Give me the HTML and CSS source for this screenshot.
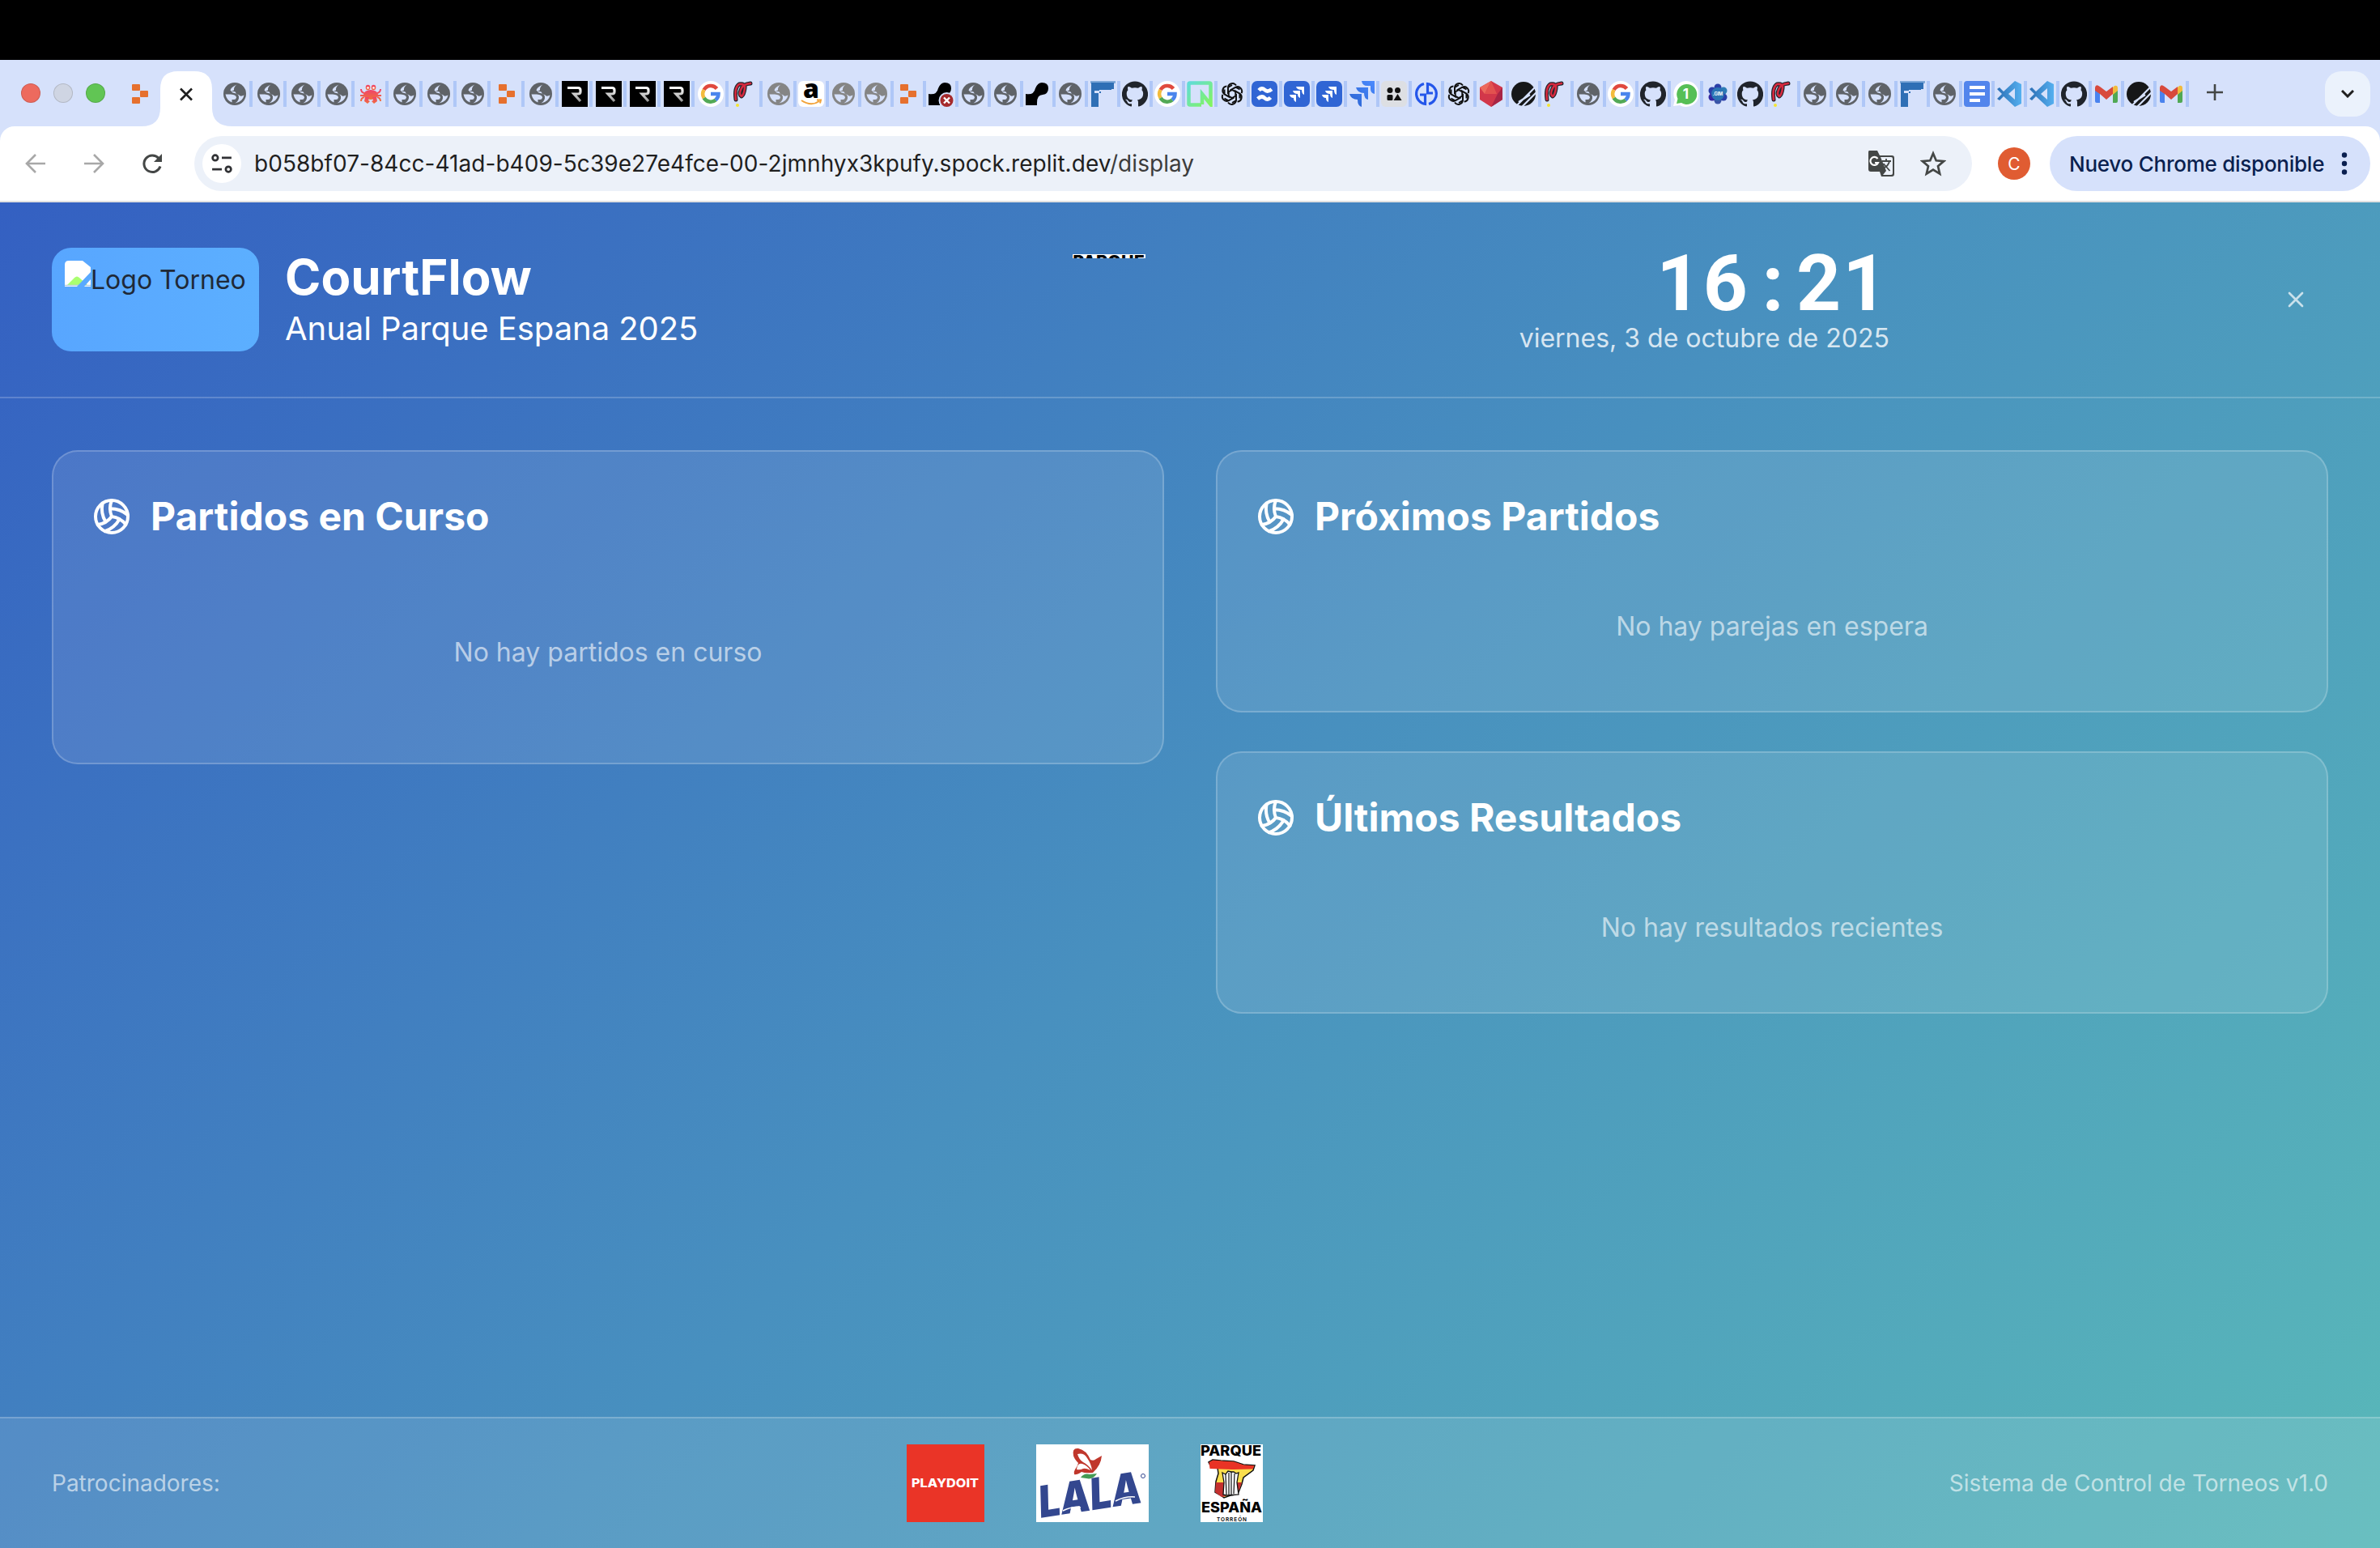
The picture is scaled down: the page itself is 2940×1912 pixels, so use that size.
FILE: index.html
```html
<!DOCTYPE html>
<html lang="es">
<head>
<meta charset="utf-8">
<title>CourtFlow</title>
<link rel="stylesheet" href="styles.css">
</head>
<body>
<svg class="defs" aria-hidden="true">
  <defs>
    <linearGradient id="gR" x1="0" y1="0" x2="0" y2="1"><stop offset="0" stop-color="#fff"/><stop offset="1" stop-color="#999"/></linearGradient>
    <linearGradient id="gN" x1="0" y1="0" x2="1" y2="1"><stop offset="0" stop-color="#5fdcd8"/><stop offset="1" stop-color="#83f55f"/></linearGradient>
    <linearGradient id="gC" x1="0" y1="0" x2="0" y2="1"><stop offset="0" stop-color="#f0426c"/><stop offset="1" stop-color="#f0703c"/></linearGradient>
    <linearGradient id="gJ" x1="0" y1="1" x2="1" y2="0"><stop offset="0" stop-color="#2a62cf"/><stop offset="1" stop-color="#4b8bff"/></linearGradient>
    <linearGradient id="gV" x1="0" y1="0" x2="1" y2="0"><stop offset="0" stop-color="#2c6fb5"/><stop offset="1" stop-color="#55b0f0"/></linearGradient>
    <symbol id="globe" viewBox="0 0 32 32"><circle cx="16" cy="16" r="14" fill="currentColor"/><path fill="#d6e1fb" d="M4.500 16.500H11q7 .5 7 4-.5 2.500-3 2.500h-2.500v3.500Q6 24 4.500 16.500zM18.500 4.500Q11 8 10.500 11.500q1.500 2 4.500 1.500q2 0 2.500 2 1 2 3.500 2 2 3 6.500.5Q26 25.500 16.500 27.500q5-3.500 4.500-8-.500-4-5.500-4.500-3-.5-3.500-2 1.500-1.500 3-1.500-.500-4 3.500-7z"/></symbol>
    <symbol id="replit" viewBox="0 0 32 32"><g fill="#e6702e"><rect x="6" y="4" width="10" height="8" rx="1"/><rect x="16" y="12" width="10" height="8" rx="1"/><rect x="6" y="20" width="10" height="8" rx="1"/></g></symbol>
    <symbol id="crab" viewBox="0 0 32 32"><g fill="url(#gC)"><ellipse cx="16" cy="17" rx="9" ry="6"/><ellipse cx="12.500" cy="8" rx="2.800" ry="3.300"/><ellipse cx="19.500" cy="8" rx="2.800" ry="3.300"/><path d="M9 20h5l-1 4 2 1-3 3-4-3zM18 20h5l1 5-4 3-3-3 2-1z"/></g><g fill="none" stroke="url(#gC)" stroke-width="2"><path d="M8 15q-4-1-4-5M8 18H3M8 20q-4 1-4 5M24 15q4-1 4-5M24 18h5M24 20q4 1 4 5"/></g><circle cx="12.500" cy="8.500" r="1.300" fill="#fff"/><circle cx="19.500" cy="8.500" r="1.300" fill="#fff"/></symbol>
    <symbol id="rr" viewBox="0 0 32 32"><path d="M0 0h32v32H0z"/><path d="M7 8.500h13q3 0 3 3v2q0 2.500-3 2.500h-5l8 9" fill="none" stroke="url(#gR)" stroke-width="3.200"/></symbol>
    <symbol id="google" viewBox="0 0 32 32"><circle cx="16" cy="16" r="16" fill="#fff"/><g fill="none" stroke-width="4.500"><path d="M23.500 9.500A9.700 9.700 0 0 0 7.600 11" stroke="#e0493e"/><path d="M7.600 11a9.700 9.700 0 0 0 0 10" stroke="#f3bc3c"/><path d="M7.600 21a9.700 9.700 0 0 0 14.500 2.500" stroke="#53a956"/><path d="M22 23.500q3.500-3 3.500-7.500h-9.500" stroke="#4a85ed"/></g></symbol>
    <symbol id="pp" viewBox="0 0 32 32"><g fill="none" stroke-linecap="round" stroke-linejoin="round"><path d="M5 23Q3 8 9 4q8-1 7 5-1 8-4 10-4-2 0-10 2-5 11-6" stroke="#20242c" stroke-width="5"/><path d="M5 23Q3 8 9 4q8-1 7 5-1 8-4 10-4-2 0-10 2-5 11-6" stroke="#d6293e" stroke-width="2.600"/></g><circle cx="7" cy="30" r="2" fill="#f5e532"/></symbol>
    <symbol id="amazon" viewBox="0 0 32 32"><rect width="32" height="32" rx="6" fill="#fff"/><text x="16" y="21" text-anchor="middle" font-family="Open Sans" font-weight="800" font-size="32">a</text><path d="M4 24q12 8 22 1M23 23.500h5l-1 4" fill="none" stroke="#f2a33a" stroke-width="2"/></symbol>
    <symbol id="blob" viewBox="0 0 32 32"><path d="M1 16q10 2 12-7Q16 2 21 2q8 0 8 7t-7 8q-7 0-7 10v3H1z"/></symbol>
    <symbol id="blobx" viewBox="0 0 32 32"><path d="M1 16q10 2 12-7Q16 2 21 2q8 0 8 7t-7 8q-7 0-7 10v3H1z"/><circle cx="23.500" cy="24" r="10" fill="#d6e1fb"/><circle cx="23.500" cy="24" r="8" fill="#a52a2c"/><path d="M20 20.500l7 7m0-7l-7 7" stroke="#fff" stroke-width="2.400"/></symbol>
    <symbol id="flag" viewBox="0 0 32 32"><path fill="#7fa8d8" d="M1 0h31v3H1z"/><path fill="#2f6fb5" d="M2 2h28v8h-3v1h-4v1h-9v3h-3v17H2z"/><path fill="#d6e1fb" d="M6 12h6v3H6zM12 11h14v2H12z"/></symbol>
    <symbol id="github" viewBox="0 0 24 24"><path fill="#20242b" d="M12 .3a12 12 0 0 0-3.800 23.400c.6.1.8-.3.8-.6v-2c-3.300.7-4-1.600-4-1.600-.6-1.400-1.400-1.800-1.400-1.800-1-.7.1-.7.1-.7 1.200 0 1.900 1.200 1.900 1.200 1 1.800 2.800 1.300 3.500 1 0-.8.400-1.300.7-1.600-2.700-.3-5.500-1.300-5.500-6 0-1.200.5-2.300 1.300-3.100-.2-.4-.6-1.600 0-3.200 0 0 1-.3 3.400 1.200a11.500 11.500 0 0 1 6 0c2.300-1.500 3.300-1.200 3.300-1.200.6 1.600.2 2.800 0 3.200.9.800 1.300 1.900 1.300 3.200 0 4.600-2.800 5.600-5.500 5.900.5.400.9 1 .9 2.200v3.300c0 .3.1.7.8.6A12 12 0 0 0 12 .3"/></symbol>
    <symbol id="nn" viewBox="0 0 32 32"><path d="M18 29.500H4q-1.500 0-1.500-1.500V4q0-1.500 1.500-1.500h24q1.500 0 1.500 1.500v25L19 16v13" fill="none" stroke="url(#gN)" stroke-width="4.500"/></symbol>
    <symbol id="gpt" viewBox="0 0 32 32"><g fill="none" stroke="#111" stroke-width="2"><g id="petal"><path d="M11 16V8a5.500 5.500 0 0 1 10-2.500M11 8l5-3"/></g><use href="#petal" transform="rotate(60 16 16)"/><use href="#petal" transform="rotate(120 16 16)"/><use href="#petal" transform="rotate(180 16 16)"/><use href="#petal" transform="rotate(240 16 16)"/><use href="#petal" transform="rotate(300 16 16)"/><path d="M16 11l4.300 2.500v5L16 21l-4.300-2.500v-5z"/></g></symbol>
    <symbol id="conf" viewBox="0 0 32 32"><rect width="32" height="32" rx="7" fill="#3065d4"/><path d="M8.500 12.500q3-4.500 7-1.500t8.500-2M24 19.500q-3 4.500-7 1.500t-8.500 2" transform="rotate(8 16 16)" fill="none" stroke="#fff" stroke-width="4.600"/></symbol>
    <symbol id="jira" viewBox="0 0 32 32"><rect width="32" height="32" rx="7" fill="#3065d4"/><path d="M15 7h10v10q-3-1-3-6-6 0-7-4zM11 12h9v9q-3-1-3-5-5 0-6-4zM7 17h8v9q-3-1-3-5-4 0-5-4z" fill="#fff"/></symbol>
    <symbol id="jira2" viewBox="0 0 32 32"><path d="M16 0h16v16q-5-1-5-6V6h-4q-6 0-7-6zM9 8h15v15q-5-1-5-8-8 0-10-7zM1 16h15v16q-5-1-5-9-8 0-10-7z" fill="url(#gJ)"/></symbol>
    <symbol id="people" viewBox="0 0 32 32"><rect width="32" height="32" rx="6" fill="#dddfe3"/><g fill="#111"><circle cx="11" cy="11.500" r="3.500"/><circle cx="20.500" cy="11.500" r="3.500"/><rect x="7.500" y="17" width="7" height="7" rx="1.500"/><path d="M20.500 16l5 8h-10z"/></g></symbol>
    <symbol id="gg" viewBox="0 0 32 32"><g fill="none" stroke="#2456ea" stroke-width="3.200"><path d="M13 3.500A12.800 12.800 0 0 0 14.500 28.500V17H8M19 28.500A12.800 12.800 0 0 0 17.500 3.500V15H24"/></g></symbol>
    <symbol id="ruby" viewBox="0 0 32 32"><path fill="#d2374a" d="M16 0l14 8v15l-14 9-14-9V8z"/><path fill="#ec6a5d" d="M16 0L8 16 2 8z"/><path fill="#e2524f" d="M16 0L8 16h15z"/><path fill="#a82545" d="M30 8v15l-14 9 8-16z"/></symbol>
    <symbol id="strike" viewBox="0 0 32 32"><circle cx="16" cy="16" r="15" fill="#161718"/><path d="M32 6L8 30M34 12L13 33M24 17L10 26" stroke="#d6e1fb" stroke-width="2.200"/></symbol>
    <symbol id="wa" viewBox="0 0 32 32"><path d="M16 0a16 16 0 1 1-7 30l-8 1 2-8A16 16 0 0 1 16 0z" fill="#fff"/><path d="M17 4a12.500 12.500 0 1 1-6 23l-6 1 1.500-6A12.500 12.500 0 0 1 17 4z" fill="#56bf56"/><text x="16.500" y="22" text-anchor="middle" font-family="Inter" font-weight="700" font-size="17" fill="#fff">1</text></symbol>
    <symbol id="gim" viewBox="0 0 32 32"><g fill="#2a3fa8"><circle cx="16" cy="8" r="4.500"/><circle cx="16" cy="24" r="4.500" fill="#3a55a8"/><circle cx="9" cy="12" r="4.500"/><circle cx="23" cy="12" r="4.500" fill="#2e7bb5"/><circle cx="9" cy="20" r="4.500" fill="#3526a0"/><circle cx="23" cy="20" r="4.500"/></g><circle cx="16" cy="16" r="8" fill="#2b74b4"/><text x="16" y="18" text-anchor="middle" font-family="Inter" font-weight="700" font-size="5.500" fill="#fff">.GIM</text></symbol>
    <symbol id="doc" viewBox="0 0 32 32"><rect width="32" height="32" rx="4" fill="#5285ec"/><path d="M7 8h19M7 16h19M7 24h13" stroke="#fff" stroke-width="4"/></symbol>
    <symbol id="vs" viewBox="0 0 32 32"><path fill="url(#gV)" d="M23 0l8 4v24l-8 4L9 19l-5 5-3-2 6-6-6-6 3-2 5 5zM23 9l-8 7 8 7z"/></symbol>
    <symbol id="gmail" viewBox="0 0 32 32"><path fill="#4a83ee" d="M2 9l6 4v14H4q-2 0-2-2z"/><path fill="#50a854" d="M30 9l-6 4v14h4q2 0 2-2z"/><path fill="#f1bb3d" d="M24 8l2-2q4-1 4 3v3l-6 5z"/><path fill="#d84a3d" d="M2 8q1-5 6-1l8 6 8-6v9l-8 7-8-7-6-4z"/></symbol>
    <symbol id="ball" viewBox="0 0 24 24"><g fill="none" stroke="#fff" stroke-width="2" stroke-linecap="round" stroke-linejoin="round"><path d="M11.100 7.100a16.550 16.550 0 0 1 10.900 4"/><path d="M12 12a12.600 12.600 0 0 1-8.700 5"/><path d="M16.800 13.600a16.550 16.550 0 0 1-9 7.500"/><path d="M20.700 17a12.800 12.800 0 0 0-8.700-5 13.300 13.300 0 0 1 0-10"/><path d="M6.300 3.800a16.550 16.550 0 0 0 1.900 11.500"/><circle cx="12" cy="12" r="10"/></g></symbol>
  </defs>
</svg>

<div class="notch-bar"></div>
<div class="tabstrip">
  <div class="lights"><i class="red"></i><i class="off"></i><i class="green"></i></div>
  <svg class="fav pinned"><use href="#replit"/></svg>
  <svg class="active-tab" viewBox="0 0 112 68"><path fill="#fff" d="M0 68q23 0 23-23V22Q23 0 45 0h20q22 0 22 22v23q0 23 25 23z"/><path d="M48 21.500l14 14m0-14l-14 14" stroke="#1f1f1f" stroke-width="2.600"/></svg>
  <div class="tabs wide">
    <span><svg class="fav"><use href="#globe"/></svg></span><span><svg class="fav"><use href="#globe"/></svg></span><span><svg class="fav"><use href="#globe"/></svg></span><span><svg class="fav"><use href="#globe"/></svg></span><span><svg class="fav"><use href="#crab"/></svg></span><span><svg class="fav"><use href="#globe"/></svg></span><span><svg class="fav"><use href="#globe"/></svg></span><span><svg class="fav"><use href="#globe"/></svg></span><span><svg class="fav"><use href="#replit"/></svg></span><span><svg class="fav"><use href="#globe"/></svg></span><span><svg class="fav"><use href="#rr"/></svg></span><span><svg class="fav"><use href="#rr"/></svg></span><span><svg class="fav"><use href="#rr"/></svg></span><span><svg class="fav"><use href="#rr"/></svg></span><span><svg class="fav"><use href="#google"/></svg></span><span><svg class="fav"><use href="#pp"/></svg></span><span><svg class="fav dim"><use href="#globe"/></svg></span>
  </div>
  <div class="tabs">
    <span><svg class="fav"><use href="#amazon"/></svg></span><span><svg class="fav dim"><use href="#globe"/></svg></span><span><svg class="fav dim"><use href="#globe"/></svg></span><span><svg class="fav"><use href="#replit"/></svg></span><span><svg class="fav"><use href="#blobx"/></svg></span><span><svg class="fav"><use href="#globe"/></svg></span><span><svg class="fav"><use href="#globe"/></svg></span><span><svg class="fav"><use href="#blob"/></svg></span><span><svg class="fav"><use href="#globe"/></svg></span><span><svg class="fav"><use href="#flag"/></svg></span><span><svg class="fav"><use href="#github"/></svg></span><span><svg class="fav"><use href="#google"/></svg></span><span><svg class="fav"><use href="#nn"/></svg></span><span><svg class="fav"><use href="#gpt"/></svg></span><span><svg class="fav"><use href="#conf"/></svg></span><span><svg class="fav"><use href="#jira"/></svg></span><span><svg class="fav"><use href="#jira"/></svg></span><span><svg class="fav"><use href="#jira2"/></svg></span><span><svg class="fav"><use href="#people"/></svg></span><span><svg class="fav"><use href="#gg"/></svg></span><span><svg class="fav"><use href="#gpt"/></svg></span><span><svg class="fav"><use href="#ruby"/></svg></span><span><svg class="fav"><use href="#strike"/></svg></span><span><svg class="fav"><use href="#pp"/></svg></span><span><svg class="fav"><use href="#globe"/></svg></span><span><svg class="fav"><use href="#google"/></svg></span><span><svg class="fav"><use href="#github"/></svg></span><span><svg class="fav"><use href="#wa"/></svg></span><span><svg class="fav"><use href="#gim"/></svg></span><span><svg class="fav"><use href="#github"/></svg></span><span><svg class="fav"><use href="#pp"/></svg></span><span><svg class="fav"><use href="#globe"/></svg></span><span><svg class="fav"><use href="#globe"/></svg></span><span><svg class="fav"><use href="#globe"/></svg></span><span><svg class="fav"><use href="#flag"/></svg></span><span><svg class="fav"><use href="#globe"/></svg></span><span><svg class="fav"><use href="#doc"/></svg></span><span><svg class="fav"><use href="#vs"/></svg></span><span><svg class="fav"><use href="#vs"/></svg></span><span><svg class="fav"><use href="#github"/></svg></span><span><svg class="fav"><use href="#gmail"/></svg></span><span><svg class="fav"><use href="#strike"/></svg></span><span><svg class="fav"><use href="#gmail"/></svg></span>
  </div>
  <svg class="new-tab" viewBox="0 0 20 20"><path d="M10 0v20M0 10h20" stroke="#444746" stroke-width="2.600"/></svg>
  <div class="tab-search"><svg viewBox="0 0 16 10"><path d="M1 1l7 7 7-7" fill="none" stroke="#1f1f1f" stroke-width="3"/></svg></div>
</div>

<div class="toolbar-wrap"><div class="toolbar">
  <svg class="nav" viewBox="0 0 32 32"><path d="M28 16H6M16 5L5 16l11 11" fill="none" stroke="#a8a8a8" stroke-width="2.600"/></svg>
  <svg class="nav" viewBox="0 0 32 32"><path d="M4 16h22M16 5l11 11-11 11" fill="none" stroke="#a8a8a8" stroke-width="2.600"/></svg>
  <svg class="nav" viewBox="0 0 32 32"><path d="M26 19.500A10.300 10.300 0 1 1 24 9.500l3 3" fill="none" stroke="#444746" stroke-width="3"/><path d="M28 4v10H18z" fill="#444746"/></svg>
  <div class="omnibox">
    <span class="site-info"><svg viewBox="0 0 24 24"><g fill="none" stroke="#303134" stroke-width="2.500"><circle cx="4.500" cy="5.500" r="3"/><path d="M12 5.500h11M1 18.500h11"/><circle cx="19.500" cy="18.500" r="3"/></g></svg></span>
    <span class="url">b058bf07-84cc-41ad-b409-5c39e27e4fce-00-2jmnhyx3kpufy.spock.replit.dev<em>/display</em></span>
    <svg class="translate" viewBox="0 0 34 34"><path d="M2 1h10l3 6h15q3 0 3 3v20q0 3-3 3H17l-2-6H4q-3 0-3-3V3q0-2 1-2z" fill="#444746"/><path d="M16 9h13q2 0 2 2v18q0 2-2 2H19l4-5z" fill="#ecf1f9"/><path d="M12.500 11A5 5 0 1 0 13 16h-4" fill="none" stroke="#fff" stroke-width="2.200"/><path d="M18 14h11M23 11v3M27 14q-1 6-8 9M19.500 17l8 9" fill="none" stroke="#444746" stroke-width="1.800"/></svg>
    <svg class="star" viewBox="0 0 32 32"><path d="M16 3.500l3.700 8.800 9.500.8-7.200 6.200 2.200 9.300-8.200-5-8.200 5L10 19.300l-7.200-6.200 9.500-.8z" fill="none" stroke="#444746" stroke-width="2.700"/></svg>
  </div>
  <span class="avatar">C</span>
  <div class="update"><span>Nuevo Chrome disponible</span><svg viewBox="0 0 8 28"><g fill="#0a1f4f"><circle cx="4" cy="3.500" r="3.200"/><circle cx="4" cy="14" r="3.200"/><circle cx="4" cy="24.500" r="3.200"/></g></svg></div>
</div></div>

<div class="page">
  <header class="header">
    <div class="brand">
      <div class="logo-box"><svg viewBox="0 0 32 32"><path d="M5 0h17l10 8v24H0V5q0-5 5-5z" fill="#fff"/><path d="M3 30l9-9q3-3 6 0l10 9z" fill="#aaff70"/><path d="M0 30.500h32" stroke="#b9cfe0" stroke-width="1.500"/><path d="M15 32L32 14v9l-8 9z" fill="#59a9ff"/></svg><span>Logo Torneo</span></div>
      <div><h1>CourtFlow</h1><p>Anual Parque Espana 2025</p></div>
    </div>
    <div class="club-strip"><div class="club-crop"><span>PARQUE</span></div></div>
    <div class="clock"><div class="time">16<span>:</span>21</div><div class="date">viernes, 3 de octubre de 2025</div></div>
    <div class="close"><svg viewBox="0 0 24 24"><path d="M18 6L6 18M6 6l12 12" fill="none" stroke="#fff" stroke-opacity=".7" stroke-width="2" stroke-linecap="round"/></svg></div>
  </header>
  <main class="main">
    <section class="card tall"><h2><svg><use href="#ball"/></svg>Partidos en Curso</h2><p>No hay partidos en curso</p></section>
    <div class="stack">
      <section class="card"><h2><svg><use href="#ball"/></svg>Próximos Partidos</h2><p>No hay parejas en espera</p></section>
      <section class="card"><h2><svg><use href="#ball"/></svg>Últimos Resultados</h2><p>No hay resultados recientes</p></section>
    </div>
  </main>
  <footer class="footer">
    <span>Patrocinadores:</span>
    <div class="sponsors">
      <svg width="96" height="96" viewBox="0 0 96 96"><path d="M0 0h96v96H0z" fill="#ea3427"/><text x="6" y="53" font-family="Inter" font-weight="800" font-size="14.500" textLength="83" lengthAdjust="spacingAndGlyphs" fill="#fff">PLAYDOIT</text></svg>
      <svg width="139" height="96" viewBox="0 0 139 96"><path d="M0 0h139v96H0z" fill="#fff"/>
        <path d="M46 14q-2-10 6-9 10 2 15 14 4 2 7-1l7-4q-1 12-11 21-9 1-14-1-6 4-9 3-1-3 1-6 3-4 4-8-5-5-6-9z" fill="#c0372c"/><path d="M51 12q8-2 12 5 5 7 6 15-5-7-11-10-5-3-7-10zM50 31q1-9 7-7 6 2 10 8-6-3-9-2-4 2-8 1z" fill="#fff"/><path d="M55 41q4-6 11-4l9-1q-5 8-13 6z" fill="#459b55"/>
        <text transform="translate(4 91) rotate(-8.500) skewX(-7)" font-family="Inter" font-weight="900" font-size="54" textLength="128" lengthAdjust="spacingAndGlyphs" fill="#33478f">LALA</text>
        <path d="M33 82q12-6 22-4M98 70q12-6 24-5" fill="none" stroke="#fff" stroke-width="1.500"/><circle cx="132" cy="39" r="2.500" fill="none" stroke="#33478f"/></svg>
      <svg width="77" height="96" viewBox="0 0 77 96"><path d="M0 0h77v96H0z" fill="#fff"/>
        <g font-family="Inter" font-weight="800"><text x="0" y="14" font-size="17" textLength="75" lengthAdjust="spacingAndGlyphs">PARQUE</text><text x="1" y="83.500" font-size="17" textLength="75" lengthAdjust="spacingAndGlyphs">ESPAÑA</text><text x="20" y="94.500" font-size="6.500" font-weight="600" textLength="37">TORREÓN</text></g>
        <path d="M10 22l5-3 10 1 16 1 12 4 14 1-2 6-12 9-2 8-4 10-4 3-6 1-8 3-4-3-7-4 1-13 3-10-1-7-9-3z" fill="#fade4d" stroke="#111" stroke-width="1.500"/><path d="M10.500 22l5-2.500 10 1 16 1 12 4 13 .8-2 4.200-26 .5-27-1z" fill="#e93325"/><path d="M19 47h12v17l-5 1-8-6zM44 47h7l-3 9-4 2z" fill="#c4302f"/>
        <path d="M27 35l4 2 3-4 4 1 3 0 3 2 3-1-2 12 2 15-15 1-4-1 1-15z" fill="#fff" stroke="#111" stroke-width="1.300"/><path d="M31 37l1 25M35 35v27M38 34v28M42 36l-1 25" stroke="#111" stroke-width="1.200"/></svg>
    </div>
    <span>Sistema de Control de Torneos v1.0</span>
  </footer>
</div>
</body>
</html>
```

FILE: styles.css
```css
* { box-sizing: border-box; margin: 0; padding: 0; }
body { width: 2940px; height: 1912px; overflow: hidden; display: flex; flex-direction: column; font-family: Inter, "Liberation Sans", sans-serif; background: #fff; }
svg { display: block; flex: none; }
.defs { position: absolute; width: 0; height: 0; }

.notch-bar { height: 74px; background: #000; }
.tabstrip { height: 82px; background: #d6e1fb; display: flex; align-items: flex-start; padding: 14px 12px 0 26px; }
.lights { display: flex; gap: 16px; padding-top: 15px; }
.lights i { width: 24px; height: 24px; border-radius: 50%; border: 1px solid #0002; }
.red { background: #ed6a5e; }
.off { background: #cfd5e3; }
.green { background: #61c554; }
.fav { width: 32px; height: 32px; color: #5f6368; }
.dim { color: #858585; }
.pinned { margin: 12px 0 0 27px; }
.active-tab { width: 112px; height: 68px; margin: 0 -17px 0 -14px; }
.tabs { display: flex; padding-top: 12px; }
.tabs span { width: 40px; height: 32px; display: flex; justify-content: center; border-right: 4px solid #afc7f7; }
.wide span { width: 42px; padding-left: 2px; }
.new-tab { width: 20px; height: 20px; margin: 16px 0 0 22px; }
.tab-search { width: 56px; height: 56px; border-radius: 20px; background: #ebf2fc; margin-left: auto; display: flex; align-items: center; justify-content: center; }
.tab-search svg { width: 16px; height: 10px; }

.toolbar-wrap { height: 94px; background: #d6e1fb; }
.toolbar { height: 94px; background: #fff; border-bottom: 2px solid #e1e1e1; border-radius: 18px 18px 0 0; display: flex; align-items: center; padding: 0 12px 0 28px; }
.nav { width: 32px; height: 32px; margin-right: 40px; }
.omnibox { width: 2196px; height: 68px; margin-left: -4px; border-radius: 34px; background: #ecf1f9; display: flex; align-items: center; padding: 0 32px 0 10px; }
.site-info { width: 48px; height: 48px; border-radius: 50%; background: #fff; display: flex; align-items: center; justify-content: center; margin-right: 16px; }
.site-info svg { width: 26px; height: 26px; }
.url { font-size: 28px; letter-spacing: .05px; color: #1f1f1f; margin-right: auto; white-space: nowrap; }
.url em { font-style: normal; color: #3c3c3c; }
.translate { width: 34px; height: 34px; margin-right: 31px; }
.star { width: 32px; height: 32px; }
.avatar { width: 40px; height: 40px; border-radius: 50%; background: #e05c32; color: #fff; font-size: 21px; display: flex; align-items: center; justify-content: center; margin-left: 32px; }
.update { width: 396px; height: 68px; border-radius: 34px; background: #d6e1fb; margin-left: auto; display: flex; align-items: center; padding: 0 28px 0 24px; justify-content: space-between; font-size: 26px; letter-spacing: -.25px; font-weight: 500; color: #0a1f4f; white-space: nowrap; }
.update svg { width: 8px; height: 28px; }

.page { flex: 1; display: flex; flex-direction: column; background: linear-gradient(135deg, #3460c2 0%, #4890bf 50%, #59b8b9 100%); color: #fff; }
.header { height: 242px; border-bottom: 2px solid rgba(255,255,255,.2); padding: 48px 64px; display: flex; justify-content: space-between; align-items: center; }
.brand { display: flex; gap: 32px; }
.logo-box { width: 256px; height: 128px; border-radius: 24px; background: linear-gradient(90deg, #58a6ff, #5cafff); padding: 16px; display: flex; color: #1f2937; font-size: 32px; line-height: 48px; white-space: nowrap; }
.logo-box svg { width: 32px; height: 32px; }
h1 { font-size: 60px; line-height: 72px; font-weight: 700; }
.brand p { font-size: 40px; line-height: 56px; letter-spacing: -.05px; }
.club-strip { height: 112px; }
.club-crop { width: 90px; height: 5px; background: #fff; overflow: hidden; color: #000; font-size: 21.5px; line-height: 12px; font-weight: 800; text-align: center; padding-top: 3px; }
.club-crop span { display: block; }
.clock { text-align: right; }
.time { font-family: Roboto, sans-serif; font-weight: 700; font-size: 96px; line-height: 96px; height: 96px; padding-top: 4px; letter-spacing: .025em; }
.time span { display: inline-block; width: .6em; text-align: center; letter-spacing: 0; }
.date { font-size: 32px; line-height: 48px; color: rgba(255,255,255,.8); }
.close { width: 80px; display: flex; justify-content: center; }
.close svg { width: 32px; height: 32px; }

.main { flex: 1; padding: 64px; display: grid; grid-template-columns: 1fr 1fr; gap: 64px; align-items: start; }
.stack { display: flex; flex-direction: column; gap: 48px; }
.card { border: 2px solid rgba(255,255,255,.2); border-radius: 32px; background: rgba(255,255,255,.1); padding: 48px; }
h2 { display: flex; align-items: center; gap: 24px; font-size: 48px; line-height: 64px; font-weight: 700; margin-bottom: 48px; }
h2 svg { width: 48px; height: 48px; }
.card p { font-size: 32px; line-height: 48px; padding: 32px 0; text-align: center; color: rgba(255,255,255,.6); }
.tall p { padding: 64px 0; }
.footer { height: 162px; border-top: 2px solid rgba(255,255,255,.2); background: rgba(255,255,255,.1); padding: 0 64px; display: flex; align-items: center; justify-content: space-between; font-size: 28px; color: rgba(255,255,255,.6); }
.sponsors { display: flex; gap: 64px; }
```
